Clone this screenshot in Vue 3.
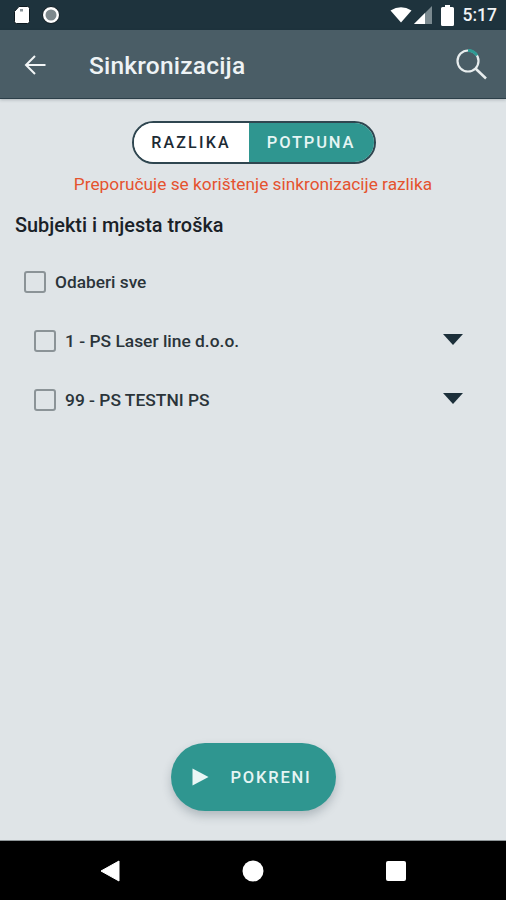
<script setup>
const items = ["1 - PS Laser line d.o.o.", "99 - PS TESTNI PS"]
</script>

<template>
  <main class="screen">
    <div class="statusbar">
      <div class="status-left">
        <svg width="18" height="20" viewBox="0 0 18 20">
          <path d="M6 1.500h8.500a2 2 0 0 1 2 2v13a2 2 0 0 1-2 2h-11a2 2 0 0 1-2-2V6.500z" fill="#fff" stroke="#0e1a20" stroke-width="1" />
          <rect x="7" y="4" width="3" height="2.500" fill="#8a9499" />
        </svg>
        <svg width="20" height="20" viewBox="0 0 20 20">
          <circle cx="10" cy="10" r="8.500" fill="#fff" stroke="#0e1a20" stroke-width="1" />
          <circle cx="10" cy="10" r="5.500" fill="#7d888c" />
        </svg>
      </div>
      <div class="status-right">
        <svg width="22" height="16" viewBox="0 0 22 16">
          <path d="M0.500 3.500Q11 -3 21.500 3.500L11 15.500z" fill="#fff" />
        </svg>
        <svg class="signal" width="18" height="18" viewBox="0 0 18 18">
          <path d="M0 18L18 0v18z" fill="#7b8a90" />
          <path d="M0 18L11 7v11z" fill="#fff" />
        </svg>
        <svg class="battery" width="13" height="21" viewBox="0 0 13 21">
          <path d="M4 0h5v2h2.500a1.500 1.500 0 0 1 1.500 1.500v16a1.500 1.500 0 0 1-1.500 1.500h-10A1.500 1.500 0 0 1 0 19.500v-16A1.500 1.500 0 0 1 1.500 2H4z" fill="#fff" />
        </svg>
        <span class="clock">5:17</span>
      </div>
    </div>

    <header class="toolbar">
      <svg class="back" width="24" height="24" viewBox="0 0 24 24">
        <path d="M22.500 12H3M12 3l-9 9 9 9" fill="none" stroke="#f2f5f6" stroke-width="2" />
      </svg>
      <h1>Sinkronizacija</h1>
      <svg class="search" width="34" height="34" viewBox="0 0 34 34">
        <circle cx="14" cy="14" r="10.500" fill="none" stroke="#e8edee" stroke-width="2.200" />
        <path d="M14 3.500A10.500 10.500 0 0 1 23 8.500" fill="none" stroke="#2f9a94" stroke-width="3" />
        <path d="M21.500 21.500L32 31.500" fill="none" stroke="#e8edee" stroke-width="2.500" />
      </svg>
    </header>

    <section class="content">
      <div class="toggle">
        <span class="toggle-item">RAZLIKA</span>
        <span class="toggle-item active">POTPUNA</span>
      </div>
      <p class="hint">Preporučuje se korištenje sinkronizacije razlika</p>
      <h2>Subjekti i mjesta troška</h2>

      <label class="select-all">
        <span class="box"></span>
        <span>Odaberi sve</span>
      </label>

      <div v-for="item in items" :key="item" class="row">
        <span class="box"></span>
        <span class="row-name">{{ item }}</span>
        <svg class="caret" width="20" height="11" viewBox="0 0 20 11">
          <path d="M0 0h20L10 11z" fill="#1c2f3a" />
        </svg>
      </div>

      <div class="spacer"></div>

      <button class="run">
        <svg width="17" height="18" viewBox="0 0 17 18">
          <path d="M0.500 0.500L16.500 9L0.500 17.500z" fill="#eaf6f5" />
        </svg>
        <span>POKRENI</span>
      </button>
    </section>

    <nav class="navbar">
      <svg width="20" height="22" viewBox="0 0 20 22">
        <path d="M19 1v20L1 11z" fill="#fff" stroke="#fff" stroke-linejoin="round" />
      </svg>
      <svg width="22" height="22" viewBox="0 0 22 22">
        <circle cx="11" cy="11" r="10.500" fill="#fff" />
      </svg>
      <svg width="20" height="20" viewBox="0 0 20 20">
        <rect width="20" height="20" rx="2" fill="#fff" />
      </svg>
    </nav>
  </main>
</template>

<style scoped>
.screen {
  width: 506px;
  height: 900px;
  display: flex;
  flex-direction: column;
  overflow: hidden;
  background: #dfe4e7;
  font-family: Roboto, "Liberation Sans", sans-serif;
}

.statusbar {
  height: 30px;
  flex: none;
  display: flex;
  justify-content: space-between;
  align-items: center;
  background: #1e333d;
  padding: 0 9px 0 13px;
}

.status-left {
  display: flex;
  align-items: center;
  gap: 10px;
}

.status-right {
  display: flex;
  align-items: center;
}

.signal {
  margin-left: 2px;
}

.battery {
  margin-left: 9px;
}

.clock {
  margin-left: 9px;
  color: #f1f4f5;
  font-size: 17.500px;
  font-weight: 500;
}

.toolbar {
  height: 69px;
  flex: none;
  box-sizing: border-box;
  display: flex;
  align-items: center;
  background: #4a5d66;
  border-bottom: 1px solid #2c3f49;
  box-shadow: 0 1px 3px rgba(30, 50, 60, 0.25);
  padding: 2px 18px 0 23px;
}

.toolbar h1 {
  flex: 1;
  margin: 0 0 0 42px;
  color: #eef3f5;
  font-size: 24.500px;
  font-weight: 500;
  letter-spacing: 0.200px;
}

.back {
  margin-top: -1px;
}

.search {
  margin-top: -2px;
}

.content {
  flex: 1;
  display: flex;
  flex-direction: column;
  min-height: 0;
  padding: 22px 0 29px;
}

.toggle {
  align-self: center;
  display: flex;
  width: 244px;
  height: 43px;
  box-sizing: border-box;
  margin-left: 1px;
  border: 2px solid #2f4650;
  border-radius: 22px;
  overflow: hidden;
}

.toggle-item {
  width: 115px;
  flex: none;
  display: flex;
  align-items: center;
  justify-content: center;
  background: #fff;
  color: #1c2a33;
  font-size: 16px;
  font-weight: 500;
  letter-spacing: 2.200px;
}

.toggle-item.active {
  flex: 1;
  background: #2f9690;
  color: #e6f5f4;
  font-size: 16.500px;
  letter-spacing: 1.800px;
}

.hint {
  margin: 10px 0 0;
  text-align: center;
  color: #e5532f;
  font-size: 17.300px;
  line-height: 20px;
}

h2 {
  margin: 20px 0 0 15px;
  color: #1a2127;
  font-size: 19.900px;
  font-weight: 500;
  line-height: 24px;
}

.select-all {
  display: flex;
  align-items: center;
  gap: 9px;
  margin: 33px 0 0 24px;
  color: #2b343a;
  font-size: 17.300px;
  font-weight: 500;
}

.box {
  width: 22px;
  height: 22px;
  flex: none;
  box-sizing: border-box;
  border: 2px solid #8b9397;
  border-radius: 3px;
}

.row {
  display: flex;
  align-items: center;
  gap: 9px;
  height: 22px;
  margin: 37px 43px 0 34px;
  color: #2b343a;
  font-size: 17.400px;
  font-weight: 500;
}

.row-name {
  flex: 1;
}

.caret {
  margin-top: -3px;
}

.spacer {
  flex: 1;
}

.run {
  align-self: center;
  display: flex;
  align-items: center;
  width: 165px;
  height: 68px;
  box-sizing: border-box;
  padding: 0 0 0 21px;
  gap: 22px;
  border: none;
  border-radius: 34px;
  background: #2f9690;
  box-shadow: 0 5px 10px rgba(40, 60, 70, 0.25);
  color: #e6f5f4;
  font-family: inherit;
  font-size: 16.500px;
  font-weight: 500;
  letter-spacing: 1.800px;
}

.navbar {
  height: 59px;
  flex: none;
  display: flex;
  align-items: center;
  justify-content: center;
  gap: 122px;
  background: #000;
  border-top: 1px solid #8e9598;
}
</style>

<style>
html,
body {
  margin: 0;
}
</style>
